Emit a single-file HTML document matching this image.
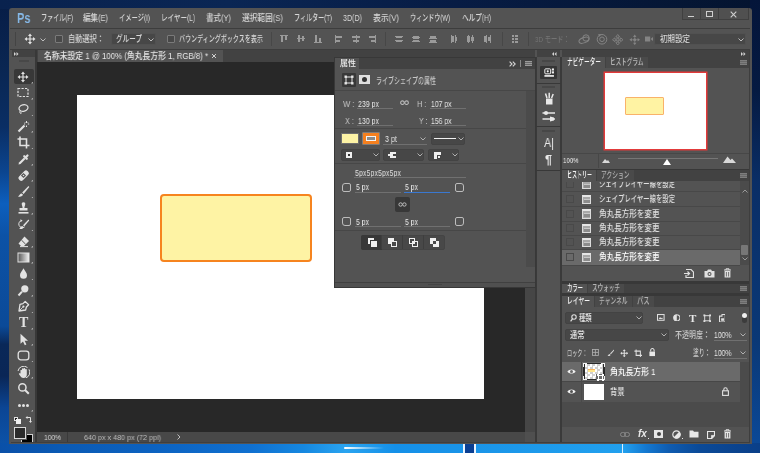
<!DOCTYPE html>
<html lang="ja"><head><meta charset="utf-8"><title>Photoshop</title>
<style>
html,body{margin:0;padding:0}
body{width:760px;height:453px;overflow:hidden;position:relative;background:#0a2a5c;font-family:"Liberation Sans","Noto Sans CJK JP",sans-serif;}
#r{position:absolute;left:0;top:0;width:760px;height:453px;overflow:hidden;filter:blur(0.4px)}
.t{will-change:transform}
#r div,#r span,#r svg{position:absolute;display:block}
.t{white-space:nowrap;transform-origin:0 50%;letter-spacing:0}
</style></head>
<body><div id="r">
<div style="left:0px;top:0px;width:760px;height:453px;background:linear-gradient(180deg,#071d46 0%,#0a2652 15%,#0a2e64 28%,#0b4590 38%,#0d5fbe 45%,#0c52a6 52%,#0b4a98 72%,#0a2858 76%,#0a2656 83%,#0b4594 90%,#0c55ac 100%);"></div>
<div style="left:0px;top:0px;width:760px;height:9px;background:linear-gradient(90deg,#09224e 0%,#0a2654 30%,#071c44 60%,#04142f 100%);"></div>
<div style="left:750px;top:0px;width:10px;height:453px;background:linear-gradient(180deg,#04153a 0%,#051a42 20%,#0a2e66 40%,#0a3470 60%,#0a3876 75%,#0b4a9a 100%);"></div>
<div style="left:0px;top:443px;width:760px;height:10px;background:linear-gradient(90deg,#0a50a8 0%,#0b5ab4 8%,#0c62c0 20%,#1070d0 33%,#1688e0 40%,#2aa4f0 45.5%,#1590e8 52%,#1a94e8 62%,#1e9cec 74%,#22a0ee 82%,#1478d0 85%,#0f5cb0 88%,#0b4a98 92%,#0a3f88 100%);"></div>
<div style="left:344px;top:447px;width:40px;height:2px;background:linear-gradient(90deg,#fff,rgba(255,255,255,0));border-radius:1px"></div>
<div style="left:464px;top:444px;width:10.5px;height:9px;background:#0b3f92;"></div>
<div style="left:463px;top:444px;width:1.5px;height:9px;background:#e8f4ff;"></div>
<div style="left:474px;top:444px;width:1.5px;height:9px;background:#e8f4ff;"></div>
<div style="left:622px;top:444px;width:1.2px;height:9px;background:#d8efff;"></div>
<div style="left:9px;top:8px;width:743px;height:436px;background:#535353;border-radius:3px 3px 0 0"></div>
<span id="t1" class="t" style="left:16.5px;top:9.0px;font-size:14px;line-height:18px;color:#86b9e8;font-weight:700;transform:scaleX(0.7883);">Ps</span>
<span id="t2" class="t" style="left:41px;top:12.0px;font-size:9px;line-height:13px;color:#d8d8d8;font-weight:500;transform:scaleX(0.6737);">ファイル(F)</span>
<span id="t3" class="t" style="left:83px;top:12.0px;font-size:9px;line-height:13px;color:#d8d8d8;font-weight:500;transform:scaleX(0.8333);">編集(E)</span>
<span id="t4" class="t" style="left:119px;top:12.0px;font-size:9px;line-height:13px;color:#d8d8d8;font-weight:500;transform:scaleX(0.6993);">イメージ(I)</span>
<span id="t5" class="t" style="left:161px;top:12.0px;font-size:9px;line-height:13px;color:#d8d8d8;font-weight:500;transform:scaleX(0.7275);">レイヤー(L)</span>
<span id="t6" class="t" style="left:206px;top:12.0px;font-size:9px;line-height:13px;color:#d8d8d8;font-weight:500;transform:scaleX(0.8333);">書式(Y)</span>
<span id="t7" class="t" style="left:242px;top:12.0px;font-size:9px;line-height:13px;color:#d8d8d8;font-weight:500;transform:scaleX(0.8542);">選択範囲(S)</span>
<span id="t8" class="t" style="left:294px;top:12.0px;font-size:9px;line-height:13px;color:#d8d8d8;font-weight:500;transform:scaleX(0.6748);">フィルター(T)</span>
<span id="t9" class="t" style="left:343px;top:12.0px;font-size:9px;line-height:13px;color:#d8d8d8;font-weight:500;transform:scaleX(0.7917);">3D(D)</span>
<span id="t10" class="t" style="left:373px;top:12.0px;font-size:9px;line-height:13px;color:#d8d8d8;font-weight:500;transform:scaleX(0.8667);">表示(V)</span>
<span id="t11" class="t" style="left:410px;top:12.0px;font-size:9px;line-height:13px;color:#d8d8d8;font-weight:500;transform:scaleX(0.6723);">ウィンドウ(W)</span>
<span id="t12" class="t" style="left:462px;top:12.0px;font-size:9px;line-height:13px;color:#d8d8d8;font-weight:500;transform:scaleX(0.7342);">ヘルプ(H)</span>
<div style="left:682px;top:8px;width:67px;height:12px;background:#505050;border:1px solid #404040;border-top:none;box-sizing:border-box"></div>
<div style="left:700px;top:8px;width:1px;height:11px;background:#404040;"></div>
<div style="left:718px;top:8px;width:1px;height:11px;background:#404040;"></div>
<div style="left:688px;top:15.5px;width:6px;height:1.6px;background:#cfcfcf;"></div>
<div style="left:706px;top:11px;width:7px;height:6px;background:transparent;border:1px solid #cfcfcf;border-top-width:1.5px;box-sizing:border-box"></div>
<svg style="left:729.5px;top:10.5px;" width="7" height="7" viewBox="0 0 7 7"><path d="M0.7 0.7L6.3 6.3M6.3 0.7L0.7 6.3" stroke="#cfcfcf" stroke-width="1.1" fill="none"/></svg>
<div style="left:10px;top:28px;width:740px;height:1px;background:#3d3d3d;"></div>
<div style="left:10px;top:49px;width:740px;height:1px;background:#3d3d3d;"></div>
<div style="left:15px;top:32px;width:1.2px;height:14px;background:#444;"></div>
<svg style="left:24px;top:33px;" width="12" height="12" viewBox="0 0 12 12"><path d="M6 0.5L8 3H6.6V5.4H9V4L11.5 6L9 8V6.6H6.6V9H8L6 11.5L4 9H5.4V6.6H3V8L0.5 6L3 4V5.4H5.4V3H4Z" fill="#e4e4e4"/></svg>
<svg style="left:40px;top:38px;" width="6" height="4" viewBox="0 0 6 4"><path d="M0.5 0.5L3 3L5.5 0.5" stroke="#bdbdbd" stroke-width="1" fill="none"/></svg>
<div style="left:55px;top:35px;width:8px;height:8px;background:#484848;border:1px solid #7a7a7a;box-sizing:border-box;border-radius:1px"></div>
<span id="t13" class="t" style="left:68px;top:33.0px;font-size:9px;line-height:13px;color:#d8d8d8;font-weight:500;transform:scaleX(0.7997);">自動選択：</span>
<div style="left:111px;top:33px;width:45px;height:12px;background:#474747;border:1px solid #515151;box-sizing:border-box;border-radius:2px"></div>
<span id="t14" class="t" style="left:116px;top:33.0px;font-size:9px;line-height:13px;color:#d8d8d8;font-weight:500;transform:scaleX(0.7330);">グループ</span>
<svg style="left:148px;top:38px;" width="6" height="4" viewBox="0 0 6 4"><path d="M0.5 0.5L3 3L5.5 0.5" stroke="#bdbdbd" stroke-width="1" fill="none"/></svg>
<div style="left:167px;top:35px;width:8px;height:8px;background:#484848;border:1px solid #7a7a7a;box-sizing:border-box;border-radius:1px"></div>
<span id="t15" class="t" style="left:179px;top:33.0px;font-size:9px;line-height:13px;color:#d8d8d8;font-weight:500;transform:scaleX(0.6714);">バウンディングボックスを表示</span>
<div style="left:271px;top:32px;width:1px;height:14px;background:#474747;"></div>
<div style="left:280px;top:35px;width:8px;height:1px;background:#9a9a9a;"></div>
<div style="left:281px;top:36px;width:2px;height:6px;background:#9a9a9a;"></div>
<div style="left:285px;top:36px;width:2px;height:4px;background:#9a9a9a;"></div>
<div style="left:297px;top:38px;width:8px;height:1px;background:#9a9a9a;"></div>
<div style="left:298px;top:35px;width:2px;height:7px;background:#9a9a9a;"></div>
<div style="left:302px;top:36px;width:2px;height:5px;background:#9a9a9a;"></div>
<div style="left:314px;top:42px;width:8px;height:1px;background:#9a9a9a;"></div>
<div style="left:315px;top:35px;width:2px;height:7px;background:#9a9a9a;"></div>
<div style="left:319px;top:38px;width:2px;height:4px;background:#9a9a9a;"></div>
<div style="left:335px;top:35px;width:1px;height:8px;background:#9a9a9a;"></div>
<div style="left:336px;top:36px;width:6px;height:2px;background:#9a9a9a;"></div>
<div style="left:336px;top:40px;width:4px;height:2px;background:#9a9a9a;"></div>
<div style="left:356px;top:35px;width:1px;height:8px;background:#9a9a9a;"></div>
<div style="left:352px;top:36px;width:8px;height:2px;background:#9a9a9a;"></div>
<div style="left:353px;top:40px;width:6px;height:2px;background:#9a9a9a;"></div>
<div style="left:375px;top:35px;width:1px;height:8px;background:#9a9a9a;"></div>
<div style="left:369px;top:36px;width:6px;height:2px;background:#9a9a9a;"></div>
<div style="left:371px;top:40px;width:4px;height:2px;background:#9a9a9a;"></div>
<div style="left:385px;top:32px;width:1px;height:14px;background:#474747;"></div>
<div style="left:395px;top:36px;width:8px;height:1px;background:#9a9a9a;"></div>
<div style="left:396px;top:37px;width:6px;height:1px;background:#9a9a9a;"></div>
<div style="left:395px;top:40px;width:8px;height:1px;background:#9a9a9a;"></div>
<div style="left:396px;top:41px;width:6px;height:1px;background:#9a9a9a;"></div>
<div style="left:412px;top:37px;width:8px;height:1px;background:#9a9a9a;"></div>
<div style="left:413px;top:36px;width:6px;height:3px;background:#9a9a9a;"></div>
<div style="left:412px;top:41px;width:8px;height:1px;background:#9a9a9a;"></div>
<div style="left:413px;top:40px;width:6px;height:2px;background:#9a9a9a;"></div>
<div style="left:429px;top:38px;width:8px;height:1px;background:#9a9a9a;"></div>
<div style="left:430px;top:36px;width:6px;height:2px;background:#9a9a9a;"></div>
<div style="left:429px;top:42px;width:8px;height:1px;background:#9a9a9a;"></div>
<div style="left:430px;top:40px;width:6px;height:2px;background:#9a9a9a;"></div>
<div style="left:451px;top:35px;width:1px;height:8px;background:#9a9a9a;"></div>
<div style="left:452px;top:36px;width:2px;height:6px;background:#9a9a9a;"></div>
<div style="left:455px;top:35px;width:1px;height:8px;background:#9a9a9a;"></div>
<div style="left:456px;top:37px;width:1px;height:4px;background:#9a9a9a;"></div>
<div style="left:468px;top:35px;width:1px;height:8px;background:#9a9a9a;"></div>
<div style="left:467px;top:36px;width:3px;height:6px;background:#9a9a9a;"></div>
<div style="left:472px;top:35px;width:1px;height:8px;background:#9a9a9a;"></div>
<div style="left:471px;top:37px;width:3px;height:4px;background:#9a9a9a;"></div>
<div style="left:486px;top:35px;width:1px;height:8px;background:#9a9a9a;"></div>
<div style="left:484px;top:36px;width:2px;height:6px;background:#9a9a9a;"></div>
<div style="left:490px;top:35px;width:1px;height:8px;background:#9a9a9a;"></div>
<div style="left:488px;top:37px;width:2px;height:4px;background:#9a9a9a;"></div>
<div style="left:502px;top:32px;width:1px;height:14px;background:#474747;"></div>
<div style="left:512px;top:35px;width:2px;height:2px;background:#9a9a9a;"></div>
<div style="left:512px;top:38px;width:2px;height:2px;background:#9a9a9a;"></div>
<div style="left:512px;top:41px;width:2px;height:2px;background:#9a9a9a;"></div>
<div style="left:515px;top:35px;width:3px;height:2px;background:#9a9a9a;"></div>
<div style="left:515px;top:38px;width:3px;height:2px;background:#9a9a9a;"></div>
<div style="left:515px;top:41px;width:3px;height:2px;background:#9a9a9a;"></div>
<div style="left:528px;top:32px;width:1px;height:14px;background:#474747;"></div>
<span id="t16" class="t" style="left:534.6px;top:33.5px;font-size:8px;line-height:12px;color:#747474;font-weight:500;transform:scaleX(0.7783);">3D モード：</span>
<svg style="left:578px;top:33px;" width="14" height="12" viewBox="0 0 14 12"><circle cx="8" cy="5" r="3.2" fill="none" stroke="#848484" stroke-width="1"/><ellipse cx="6" cy="7.2" rx="5.2" ry="2.6" fill="none" stroke="#848484" stroke-width="1" transform="rotate(-20 6 7.2)"/></svg>
<svg style="left:595.5px;top:33px;" width="12" height="12" viewBox="0 0 12 12"><circle cx="6" cy="6.3" r="4.8" fill="none" stroke="#848484" stroke-width="1"/><circle cx="6" cy="6.3" r="2.3" fill="none" stroke="#848484" stroke-width="1"/><path d="M2.2 1L5.4 1.4L3.2 3.8Z" fill="#848484"/></svg>
<svg style="left:611.5px;top:33.5px;" width="11.5" height="11.5" viewBox="0 0 12 12"><path d="M6 0.5L8 3H6.6V5.4H9V4L11.5 6L9 8V6.6H6.6V9H8L6 11.5L4 9H5.4V6.6H3V8L0.5 6L3 4V5.4H5.4V3H4Z" fill="none" stroke="#848484" stroke-width="0.9"/></svg>
<svg style="left:628.5px;top:33.5px;" width="11.5" height="11.5" viewBox="0 0 12 12"><circle cx="6" cy="6" r="1.6" fill="#848484"/><path d="M6 0.4L7.8 3H4.2ZM6 11.6L7.8 9H4.2ZM0.4 6L3 4.2V7.8ZM11.6 6L9 4.2V7.8Z" fill="#848484"/><path d="M6 2.5V9.5M2.5 6H9.5" stroke="#848484" stroke-width="0.7"/></svg>
<svg style="left:644.5px;top:36px;" width="8" height="6" viewBox="0 0 8 6"><rect x="0" y="0.5" width="5.2" height="5" fill="#848484"/><path d="M5.6 3L8 1V5Z" fill="#848484"/></svg>
<div style="left:654px;top:33px;width:92px;height:12px;background:#474747;border:1px solid #515151;box-sizing:border-box;border-radius:2px"></div>
<span id="t17" class="t" style="left:660px;top:33.0px;font-size:9px;line-height:13px;color:#d8d8d8;font-weight:500;transform:scaleX(0.8330);">初期設定</span>
<svg style="left:738px;top:38px;" width="6" height="4" viewBox="0 0 6 4"><path d="M0.5 0.5L3 3L5.5 0.5" stroke="#bdbdbd" stroke-width="1" fill="none"/></svg>
<div style="left:12px;top:50px;width:23px;height:7px;background:#424242;"></div>
<svg style="left:14px;top:51.5px;" width="5" height="4" viewBox="0 0 5 4"><path d="M0 0L2 2L0 4ZM2.5 0L4.5 2L2.5 4Z" fill="#d4d4d4"/></svg>
<div style="left:35px;top:50px;width:2px;height:392px;background:#383838;"></div>
<div style="left:37px;top:50px;width:497.5px;height:12px;background:#424242;"></div>
<div style="left:534.5px;top:57px;width:2px;height:385px;background:#3a3a3a;"></div>
<div style="left:536.5px;top:50px;width:23.8px;height:7px;background:#424242;"></div>
<svg style="left:552px;top:51.5px;" width="5" height="4" viewBox="0 0 5 4"><path d="M2 0L0 2L2 4ZM4.5 0L2.5 2L4.5 4Z" fill="#d4d4d4"/></svg>
<div style="left:560.3px;top:57px;width:1.8px;height:385px;background:#3a3a3a;"></div>
<div style="left:562px;top:50px;width:187px;height:7px;background:#424242;"></div>
<svg style="left:741px;top:51.5px;" width="5" height="4" viewBox="0 0 5 4"><path d="M0 0L2 2L0 4ZM2.5 0L4.5 2L2.5 4Z" fill="#d4d4d4"/></svg>
<div style="left:749px;top:50px;width:3px;height:394px;background:#525252;"></div>
<div style="left:749px;top:50px;width:1px;height:392px;background:#3e3e3e;"></div>
<div style="left:19px;top:60px;width:10px;height:2px;background:#484848;"></div>
<div style="left:14px;top:69px;width:19.5px;height:15px;background:#383838;border-radius:2px"></div>
<svg style="left:17px;top:70.5px;" width="12" height="12" viewBox="0 0 12 12"><path d="M6 0.5L8 3H6.6V5.4H9V4L11.5 6L9 8V6.6H6.6V9H8L6 11.5L4 9H5.4V6.6H3V8L0.5 6L3 4V5.4H5.4V3H4Z" fill="#e2e2e2"/></svg>
<svg style="left:30.5px;top:81.0px;" width="2.5" height="2.5" viewBox="0 0 2.5 2.5"><path d="M2.5 0V2.5H0Z" fill="#b4b4b4"/></svg>
<svg style="left:17px;top:86.9px;" width="13" height="12" viewBox="0 0 13 12"><rect x="1" y="1.5" width="10" height="8" fill="none" stroke="#e2e2e2" stroke-width="1.2" stroke-dasharray="2.2 1.3"/></svg>
<svg style="left:30.5px;top:97.4px;" width="2.5" height="2.5" viewBox="0 0 2.5 2.5"><path d="M2.5 0V2.5H0Z" fill="#b4b4b4"/></svg>
<svg style="left:17px;top:103.3px;" width="13" height="13" viewBox="0 0 13 13"><ellipse cx="6.5" cy="5" rx="4.6" ry="3.2" fill="none" stroke="#e2e2e2" stroke-width="1.2" transform="rotate(-15 6.5 5)"/><path d="M3.5 7.5C2.5 8.5 2.5 10 3.8 10.5C4.5 10.5 4.5 9.5 3.8 9.2" fill="none" stroke="#e2e2e2" stroke-width="1"/></svg>
<svg style="left:30.5px;top:113.8px;" width="2.5" height="2.5" viewBox="0 0 2.5 2.5"><path d="M2.5 0V2.5H0Z" fill="#b4b4b4"/></svg>
<svg style="left:17px;top:119.7px;" width="13" height="13" viewBox="0 0 13 13"><path d="M1.5 11.5L7.5 5.5" stroke="#e2e2e2" stroke-width="2.2"/><path d="M9.5 1V3M9.5 5.5V7M7 4H8.2M10.8 4H12.2M7.8 2.2L8.4 2.8M11.2 2.2L10.6 2.8" stroke="#e2e2e2" stroke-width="1"/></svg>
<svg style="left:30.5px;top:130.2px;" width="2.5" height="2.5" viewBox="0 0 2.5 2.5"><path d="M2.5 0V2.5H0Z" fill="#b4b4b4"/></svg>
<svg style="left:17px;top:136.1px;" width="13" height="13" viewBox="0 0 13 13"><path d="M3 0.5V9.5H12.5M0.5 3H9.5V12.5" fill="none" stroke="#e2e2e2" stroke-width="1.6"/></svg>
<svg style="left:30.5px;top:146.6px;" width="2.5" height="2.5" viewBox="0 0 2.5 2.5"><path d="M2.5 0V2.5H0Z" fill="#b4b4b4"/></svg>
<svg style="left:17px;top:152.5px;" width="13" height="13" viewBox="0 0 13 13"><path d="M1.5 11.5L2 9.5L7 4.5L8.5 6L3.5 11Z" fill="#e2e2e2"/><path d="M7.2 3.2L9.8 5.8M8.5 4.5L10.5 2.5" stroke="#e2e2e2" stroke-width="2.2" stroke-linecap="round"/></svg>
<svg style="left:30.5px;top:163.0px;" width="2.5" height="2.5" viewBox="0 0 2.5 2.5"><path d="M2.5 0V2.5H0Z" fill="#b4b4b4"/></svg>
<svg style="left:17px;top:168.9px;" width="13" height="13" viewBox="0 0 13 13"><rect x="0.5" y="4" width="12" height="5.4" rx="2.2" fill="#e2e2e2" transform="rotate(-45 6.5 6.5)"/><rect x="4.7" y="4.7" width="3.6" height="3.6" fill="#535353" transform="rotate(-45 6.5 6.5)"/><circle cx="6.5" cy="6.5" r="0.8" fill="#e2e2e2"/></svg>
<svg style="left:30.5px;top:179.4px;" width="2.5" height="2.5" viewBox="0 0 2.5 2.5"><path d="M2.5 0V2.5H0Z" fill="#b4b4b4"/></svg>
<svg style="left:17px;top:185.3px;" width="13" height="13" viewBox="0 0 13 13"><path d="M11.5 1L5.2 7.6L6.6 9L12.3 2Z" fill="#e2e2e2"/><path d="M4.6 8.4C3 8.4 2.8 10 1 11.4C3.4 12 5.8 11.4 5.9 9.6Z" fill="#e2e2e2"/></svg>
<svg style="left:30.5px;top:195.8px;" width="2.5" height="2.5" viewBox="0 0 2.5 2.5"><path d="M2.5 0V2.5H0Z" fill="#b4b4b4"/></svg>
<svg style="left:17px;top:201.7px;" width="13" height="13" viewBox="0 0 13 13"><path d="M4.7 1.5A1.9 1.9 0 0 1 8.3 1.5C8.3 3.2 7.4 4 7.4 6H10.5V8.5H2.5V6H5.6C5.6 4 4.7 3.2 4.7 1.5Z" fill="#e2e2e2"/><rect x="1.5" y="10" width="10" height="1.6" fill="#e2e2e2"/></svg>
<svg style="left:30.5px;top:212.2px;" width="2.5" height="2.5" viewBox="0 0 2.5 2.5"><path d="M2.5 0V2.5H0Z" fill="#b4b4b4"/></svg>
<svg style="left:17px;top:218.1px;" width="13" height="13" viewBox="0 0 13 13"><path d="M11.5 1.5L6 7.2L7.2 8.4L12.2 2.4Z" fill="#e2e2e2"/><path d="M5.4 8C4 8 3.8 9.6 2.2 10.8C4.4 11.4 6.4 10.8 6.5 9.2Z" fill="#e2e2e2"/><path d="M5 2.5A3.6 3.6 0 1 0 7.5 9" fill="none" stroke="#e2e2e2" stroke-width="1"/><path d="M3.4 1.2L5.6 2.5L3.6 4Z" fill="#e2e2e2"/></svg>
<svg style="left:30.5px;top:228.6px;" width="2.5" height="2.5" viewBox="0 0 2.5 2.5"><path d="M2.5 0V2.5H0Z" fill="#b4b4b4"/></svg>
<svg style="left:17px;top:234.5px;" width="13" height="13" viewBox="0 0 13 13"><path d="M7.5 1.5L12 6L7 11H4L1.5 8.5Z" fill="#e2e2e2"/><path d="M4.4 5L8.6 9.2" stroke="#535353" stroke-width="1"/><path d="M3 11.6H11" stroke="#e2e2e2" stroke-width="1"/></svg>
<svg style="left:30.5px;top:245.0px;" width="2.5" height="2.5" viewBox="0 0 2.5 2.5"><path d="M2.5 0V2.5H0Z" fill="#b4b4b4"/></svg>
<svg style="left:17px;top:250.9px;" width="13" height="13" viewBox="0 0 13 13"><defs><linearGradient id="gr1" x1="0" x2="1"><stop offset="0" stop-color="#555"/><stop offset="1" stop-color="#f2f2f2"/></linearGradient></defs><rect x="1" y="2" width="11" height="9" fill="url(#gr1)" stroke="#e2e2e2" stroke-width="1"/></svg>
<svg style="left:30.5px;top:261.4px;" width="2.5" height="2.5" viewBox="0 0 2.5 2.5"><path d="M2.5 0V2.5H0Z" fill="#b4b4b4"/></svg>
<svg style="left:17px;top:267.3px;" width="13" height="13" viewBox="0 0 13 13"><path d="M6.5 1.2C8 4 10 5.8 10 8.2A3.5 3.5 0 0 1 3 8.2C3 5.8 5 4 6.5 1.2Z" fill="#e2e2e2"/></svg>
<svg style="left:30.5px;top:277.8px;" width="2.5" height="2.5" viewBox="0 0 2.5 2.5"><path d="M2.5 0V2.5H0Z" fill="#b4b4b4"/></svg>
<svg style="left:17px;top:283.7px;" width="13" height="13" viewBox="0 0 13 13"><circle cx="7.8" cy="4.8" r="3.6" fill="#e2e2e2"/><path d="M5 7.6L1.5 11.5" stroke="#e2e2e2" stroke-width="2"/></svg>
<svg style="left:30.5px;top:294.2px;" width="2.5" height="2.5" viewBox="0 0 2.5 2.5"><path d="M2.5 0V2.5H0Z" fill="#b4b4b4"/></svg>
<svg style="left:17px;top:300.1px;" width="13" height="13" viewBox="0 0 13 13"><path d="M8.2 1.4L11.6 4.8L9.4 7L8.6 10L2 11L3 4.4L6 3.6Z" fill="none" stroke="#e2e2e2" stroke-width="1.3" stroke-linejoin="round"/><circle cx="6.4" cy="6.6" r="1.1" fill="#e2e2e2"/><path d="M2.2 10.8L5.8 7.2" stroke="#e2e2e2" stroke-width="0.9"/></svg>
<svg style="left:30.5px;top:310.6px;" width="2.5" height="2.5" viewBox="0 0 2.5 2.5"><path d="M2.5 0V2.5H0Z" fill="#b4b4b4"/></svg>
<span id="t18" class="t" style="left:18.5px;top:314.0px;font-size:14px;line-height:18px;color:#e2e2e2;font-weight:700;transform:scaleX(0.9632);font-family:'Liberation Serif',serif;">T</span>
<svg style="left:30.5px;top:327.0px;" width="2.5" height="2.5" viewBox="0 0 2.5 2.5"><path d="M2.5 0V2.5H0Z" fill="#b4b4b4"/></svg>
<svg style="left:17px;top:332.9px;" width="13" height="13" viewBox="0 0 13 13"><path d="M3.5 0.8V10.8L6 8.4L7.8 12.2L9.4 11.5L7.6 7.8H11Z" fill="#e2e2e2"/></svg>
<svg style="left:30.5px;top:343.4px;" width="2.5" height="2.5" viewBox="0 0 2.5 2.5"><path d="M2.5 0V2.5H0Z" fill="#b4b4b4"/></svg>
<svg style="left:17px;top:349.3px;" width="13" height="13" viewBox="0 0 13 13"><rect x="1.2" y="2.2" width="10.6" height="8.6" rx="2.6" fill="none" stroke="#e2e2e2" stroke-width="1.3"/></svg>
<svg style="left:30.5px;top:359.8px;" width="2.5" height="2.5" viewBox="0 0 2.5 2.5"><path d="M2.5 0V2.5H0Z" fill="#b4b4b4"/></svg>
<svg style="left:17px;top:365.7px;" width="13" height="13" viewBox="0 0 13 13"><path d="M3.5 7.5V4.2A0.8 0.8 0 0 1 5 4.2V3A0.8 0.8 0 0 1 6.6 3V2.8A0.8 0.8 0 0 1 8.2 3V3.6A0.8 0.8 0 0 1 9.8 3.8V8.5C9.8 11 8.5 12 6.5 12C4.6 12 4 11 2 8.2C1.6 7.4 2.6 6.8 3.5 7.5Z" fill="#e2e2e2"/><path d="M1 5A5.8 5.8 0 0 1 10.5 1.6" fill="none" stroke="#e2e2e2" stroke-width="1"/><path d="M12 3.4A5.8 5.8 0 0 1 9 11.8" fill="none" stroke="#e2e2e2" stroke-width="1"/></svg>
<svg style="left:30.5px;top:376.2px;" width="2.5" height="2.5" viewBox="0 0 2.5 2.5"><path d="M2.5 0V2.5H0Z" fill="#b4b4b4"/></svg>
<svg style="left:17px;top:382.1px;" width="13" height="13" viewBox="0 0 13 13"><circle cx="5.4" cy="5.4" r="3.6" fill="none" stroke="#e2e2e2" stroke-width="1.5"/><path d="M8 8L11.8 11.8" stroke="#e2e2e2" stroke-width="2"/></svg>
<div style="left:18.3px;top:403.9px;width:3px;height:3px;background:#e2e2e2;border-radius:50%"></div>
<div style="left:22.3px;top:403.9px;width:3px;height:3px;background:#e2e2e2;border-radius:50%"></div>
<div style="left:26.3px;top:403.9px;width:3px;height:3px;background:#e2e2e2;border-radius:50%"></div>
<svg style="left:30.5px;top:409.0px;" width="2.5" height="2.5" viewBox="0 0 2.5 2.5"><path d="M2.5 0V2.5H0Z" fill="#b4b4b4"/></svg>
<div style="left:14px;top:417px;width:4px;height:4px;background:#1c1c1c;border:1px solid #e0e0e0;box-sizing:border-box"></div>
<div style="left:16px;top:419px;width:5px;height:5px;background:#f0f0f0;"></div>
<svg style="left:25px;top:416px;" width="8" height="8" viewBox="0 0 8 8"><path d="M2 1.5H5.5V5" fill="none" stroke="#e0e0e0" stroke-width="1"/><path d="M0.5 1.5L2.5 0V3Z M5.5 7L4 5H7Z" fill="#e0e0e0"/></svg>
<div style="left:21px;top:434px;width:12px;height:8.5px;background:#000;border:1px solid #cfcfcf;border-bottom:none;box-sizing:border-box"></div>
<div style="left:14px;top:427px;width:12px;height:12px;background:#2b2b2b;border:1px solid #d8d8d8;box-sizing:border-box;box-shadow:0 0 0 1px #535353"></div>
<div style="left:38px;top:50px;width:185px;height:12px;background:#535353;"></div>
<span id="t19" class="t" style="left:44px;top:50.0px;font-size:9px;line-height:13px;color:#e6e6e6;font-weight:500;transform:scaleX(0.8692);">名称未設定 1 @ 100% (角丸長方形 1, RGB/8) *</span>
<svg style="left:211px;top:53px;" width="6" height="6" viewBox="0 0 6 6"><path d="M1 1L5 5M5 1L1 5" stroke="#cfcfcf" stroke-width="1" fill="none"/></svg>
<div style="left:37px;top:62px;width:488px;height:369.5px;background:#282828;"></div>
<div style="left:524.5px;top:62px;width:10.2px;height:369.5px;background:#464646;"></div>
<div style="left:37px;top:431.5px;width:498px;height:10px;background:#484848;"></div>
<div style="left:524.5px;top:431.5px;width:10.2px;height:10px;background:#4f4f4f;"></div>
<div style="left:67px;top:431.5px;width:1px;height:10px;background:#3a3a3a;"></div>
<span id="t20" class="t" style="left:44px;top:431.5px;font-size:8px;line-height:12px;color:#d8d8d8;font-weight:500;transform:scaleX(0.8305);">100%</span>
<span id="t21" class="t" style="left:84px;top:431.5px;font-size:8px;line-height:12px;color:#bdbdbd;font-weight:500;transform:scaleX(0.8970);">640 px x 480 px (72 ppi)</span>
<svg style="left:177px;top:434px;" width="4" height="6" viewBox="0 0 4 6"><path d="M0.5 0.5L3 3L0.5 5.5" stroke="#bdbdbd" stroke-width="1" fill="none"/></svg>
<div style="left:77px;top:95px;width:407px;height:304px;background:#fff;"></div>
<div style="left:160px;top:193.7px;width:152px;height:67.9px;background:#fef3a4;border:2px solid #f6841f;border-radius:4px;box-sizing:border-box"></div>
<div style="left:334px;top:57px;width:202px;height:231px;background:#383838;"></div>
<div style="left:335px;top:58px;width:200px;height:11px;background:#424242;"></div>
<div style="left:335px;top:58px;width:24px;height:12px;background:#535353;"></div>
<span id="t22" class="t" style="left:339.5px;top:58.3px;font-size:8px;line-height:12px;color:#f0f0f0;font-weight:500;transform:scaleX(0.9688);">属性</span>
<svg style="left:509px;top:60.5px;" width="7" height="6" viewBox="0 0 7 6"><path d="M0.6 0.6L3 3L0.6 5.4M3.8 0.6L6.2 3L3.8 5.4" fill="none" stroke="#d4d4d4" stroke-width="1.1"/></svg>
<div style="left:520px;top:60px;width:1px;height:7px;background:#8a8a8a;"></div>
<div style="left:525px;top:61px;width:6.5px;height:5px;background:#686868;"></div>
<div style="left:525px;top:61px;width:6.5px;height:1px;background:#9a9a9a;"></div>
<div style="left:525px;top:63px;width:6.5px;height:1px;background:#9a9a9a;"></div>
<div style="left:525px;top:65px;width:6.5px;height:1px;background:#9a9a9a;"></div>
<div style="left:335px;top:69px;width:200px;height:213px;background:#535353;"></div>
<div style="left:342px;top:73px;width:14px;height:14px;background:#383838;border-radius:1px"></div>
<svg style="left:344px;top:75px;" width="10" height="10" viewBox="0 0 10 10"><rect x="2" y="2" width="6" height="6" fill="none" stroke="#e6e6e6" stroke-width="1"/><rect x="0.5" y="0.5" width="2.4" height="2.4" fill="#e6e6e6"/><rect x="7.1" y="0.5" width="2.4" height="2.4" fill="#e6e6e6"/><rect x="0.5" y="7.1" width="2.4" height="2.4" fill="#e6e6e6"/><rect x="7.1" y="7.1" width="2.4" height="2.4" fill="#e6e6e6"/></svg>
<div style="left:359px;top:75px;width:11px;height:9px;background:#e0e0e0;"></div>
<div style="left:362px;top:77px;width:5px;height:5px;background:#333;border-radius:50%"></div>
<span id="t23" class="t" style="left:376px;top:74.5px;font-size:9px;line-height:13px;color:#c8c8c8;font-weight:500;transform:scaleX(0.6666);">ライブシェイプの属性</span>
<div style="left:335px;top:90px;width:200px;height:1px;background:#474747;"></div>
<div style="left:526px;top:91px;width:9px;height:176px;background:#4b4b4b;"></div>
<span id="t24" class="t" style="left:342.5px;top:98.0px;font-size:9px;line-height:13px;color:#c4c4c4;font-weight:500;transform:scaleX(0.8519);">W :</span>
<span id="t25" class="t" style="left:357.5px;top:98.0px;font-size:9px;line-height:13px;color:#e8e8e8;font-weight:500;transform:scaleX(0.7769);">239 px</span>
<div style="left:357px;top:108px;width:36px;height:1px;background:#707070;"></div>
<span id="t26" class="t" style="left:417px;top:98.0px;font-size:9px;line-height:13px;color:#c4c4c4;font-weight:500;transform:scaleX(0.8250);">H :</span>
<span id="t27" class="t" style="left:431px;top:98.0px;font-size:9px;line-height:13px;color:#e8e8e8;font-weight:500;transform:scaleX(0.7584);">107 px</span>
<div style="left:430px;top:108px;width:36px;height:1px;background:#707070;"></div>
<span id="t28" class="t" style="left:345px;top:114.5px;font-size:9px;line-height:13px;color:#c4c4c4;font-weight:500;transform:scaleX(0.8170);">X :</span>
<span id="t29" class="t" style="left:357.5px;top:114.5px;font-size:9px;line-height:13px;color:#e8e8e8;font-weight:500;transform:scaleX(0.7769);">130 px</span>
<div style="left:357px;top:124.5px;width:36px;height:1px;background:#707070;"></div>
<span id="t30" class="t" style="left:418.5px;top:114.5px;font-size:9px;line-height:13px;color:#c4c4c4;font-weight:500;transform:scaleX(0.7839);">Y :</span>
<span id="t31" class="t" style="left:431px;top:114.5px;font-size:9px;line-height:13px;color:#e8e8e8;font-weight:500;transform:scaleX(0.7584);">156 px</span>
<div style="left:430px;top:124.5px;width:36px;height:1px;background:#707070;"></div>
<svg style="left:399.5px;top:100px;" width="9" height="5.4" viewBox="0 0 10 6"><circle cx="2.7" cy="3" r="2" fill="none" stroke="#b8b8b8" stroke-width="1.2"/><circle cx="7.3" cy="3" r="2" fill="none" stroke="#b8b8b8" stroke-width="1.2"/></svg>
<div style="left:335px;top:128px;width:191px;height:1px;background:#474747;"></div>
<div style="left:341px;top:133px;width:17.5px;height:10.5px;background:#fdf3a5;border:1px solid #6e6e6e;box-sizing:border-box"></div>
<div style="left:361.5px;top:132px;width:18.5px;height:12.5px;background:#f5801f;border:1px solid #7c7c7c;box-sizing:border-box;border-radius:1px"></div>
<div style="left:366px;top:135.5px;width:10px;height:5.5px;background:#8a8a8a;border:1px solid #f4f4f4;box-sizing:border-box"></div>
<span id="t32" class="t" style="left:385px;top:132.5px;font-size:9px;line-height:13px;color:#e8e8e8;font-weight:500;transform:scaleX(0.7992);">3 pt</span>
<svg style="left:419.5px;top:136.5px;" width="6" height="4" viewBox="0 0 6 4"><path d="M0.5 0.5L3 3L5.5 0.5" stroke="#b0b0b0" stroke-width="1" fill="none"/></svg>
<div style="left:383px;top:144px;width:44px;height:1px;background:#707070;"></div>
<div style="left:431px;top:133px;width:34px;height:12px;background:#474747;border:1px solid #434343;box-sizing:border-box;border-radius:2px"></div>
<div style="left:434px;top:137.6px;width:22px;height:1.7px;background:#f0f0f0;"></div>
<svg style="left:457.5px;top:136.5px;" width="6" height="4" viewBox="0 0 6 4"><path d="M0.5 0.5L3 3L5.5 0.5" stroke="#b0b0b0" stroke-width="1" fill="none"/></svg>
<div style="left:340.5px;top:149px;width:39.5px;height:12px;background:#474747;border:1px solid #434343;box-sizing:border-box;border-radius:2px"></div>
<svg style="left:372.5px;top:153px;" width="6" height="4" viewBox="0 0 6 4"><path d="M0.5 0.5L3 3L5.5 0.5" stroke="#b0b0b0" stroke-width="1" fill="none"/></svg>
<div style="left:383px;top:149px;width:41px;height:12px;background:#474747;border:1px solid #434343;box-sizing:border-box;border-radius:2px"></div>
<svg style="left:417px;top:153px;" width="6" height="4" viewBox="0 0 6 4"><path d="M0.5 0.5L3 3L5.5 0.5" stroke="#b0b0b0" stroke-width="1" fill="none"/></svg>
<div style="left:428px;top:149px;width:31px;height:12px;background:#474747;border:1px solid #434343;box-sizing:border-box;border-radius:2px"></div>
<svg style="left:452px;top:153px;" width="6" height="4" viewBox="0 0 6 4"><path d="M0.5 0.5L3 3L5.5 0.5" stroke="#b0b0b0" stroke-width="1" fill="none"/></svg>
<div style="left:346px;top:152px;width:6px;height:6px;background:#f0f0f0;"></div>
<div style="left:348px;top:154px;width:2px;height:2px;background:#333;"></div>
<div style="left:390px;top:152px;width:6px;height:6px;background:#f0f0f0;"></div>
<div style="left:388px;top:154px;width:3px;height:2px;background:#f0f0f0;"></div>
<div style="left:393px;top:154px;width:3px;height:2px;background:#454545;"></div>
<div style="left:434px;top:152px;width:7px;height:7px;background:#f0f0f0;"></div>
<div style="left:437px;top:155px;width:4px;height:4px;background:#454545;"></div>
<div style="left:438px;top:156px;width:2px;height:2px;background:#f0f0f0;"></div>
<div style="left:335px;top:163px;width:191px;height:1px;background:#474747;"></div>
<span id="t33" class="t" style="left:354.5px;top:167.0px;font-size:9px;line-height:13px;color:#e0e0e0;font-weight:500;transform:scaleX(0.7925);">5px5px5px5px</span>
<div style="left:354px;top:177px;width:112px;height:1px;background:#707070;"></div>
<div style="left:342px;top:182.5px;width:9px;height:9px;background:transparent;border:1px solid #bcbcbc;box-sizing:border-box;border-radius:3px 2px 2px 2px"></div>
<div style="left:454.5px;top:182.5px;width:9px;height:9px;background:transparent;border:1px solid #bcbcbc;box-sizing:border-box;border-radius:2px 3px 2px 2px"></div>
<div style="left:342px;top:217px;width:9px;height:9px;background:transparent;border:1px solid #bcbcbc;box-sizing:border-box;border-radius:2px 2px 2px 3px"></div>
<div style="left:454.5px;top:217px;width:9px;height:9px;background:transparent;border:1px solid #bcbcbc;box-sizing:border-box;border-radius:2px 2px 3px 2px"></div>
<span id="t34" class="t" style="left:355.5px;top:181.0px;font-size:9px;line-height:13px;color:#e8e8e8;font-weight:500;transform:scaleX(0.7640);">5 px</span>
<span id="t35" class="t" style="left:404.5px;top:181.0px;font-size:9px;line-height:13px;color:#e8e8e8;font-weight:500;transform:scaleX(0.7640);">5 px</span>
<div style="left:355px;top:191.5px;width:46px;height:1px;background:#707070;"></div>
<div style="left:404px;top:191.5px;width:46px;height:1px;background:#3a78d0;"></div>
<span id="t36" class="t" style="left:355.5px;top:215.5px;font-size:9px;line-height:13px;color:#e8e8e8;font-weight:500;transform:scaleX(0.7640);">5 px</span>
<span id="t37" class="t" style="left:404.5px;top:215.5px;font-size:9px;line-height:13px;color:#e8e8e8;font-weight:500;transform:scaleX(0.7640);">5 px</span>
<div style="left:355px;top:226.0px;width:46px;height:1px;background:#707070;"></div>
<div style="left:404px;top:226.0px;width:46px;height:1px;background:#707070;"></div>
<div style="left:395px;top:196.5px;width:15px;height:15px;background:#383838;border-radius:2px"></div>
<svg style="left:398px;top:201.5px;" width="9" height="5" viewBox="0 0 9 5"><circle cx="2.6" cy="2.5" r="1.7" fill="none" stroke="#bdbdbd" stroke-width="1"/><circle cx="6.4" cy="2.5" r="1.7" fill="none" stroke="#bdbdbd" stroke-width="1"/></svg>
<div style="left:335px;top:230px;width:191px;height:1px;background:#474747;"></div>
<div style="left:361px;top:234.5px;width:83.5px;height:15px;background:#484848;border:1px solid #444;box-sizing:border-box;border-radius:2px"></div>
<div style="left:361px;top:234.5px;width:21px;height:15px;background:#383838;border-radius:2px 0 0 2px"></div>
<div style="left:381.3px;top:235px;width:1px;height:14px;background:#3e3e3e;"></div>
<div style="left:402.1px;top:235px;width:1px;height:14px;background:#3e3e3e;"></div>
<div style="left:422.9px;top:235px;width:1px;height:14px;background:#3e3e3e;"></div>
<div style="left:367.5px;top:238px;width:6px;height:6px;background:#f0f0f0;"></div>
<div style="left:370.5px;top:241px;width:6px;height:6px;background:#f0f0f0;box-shadow:0 0 0 1px #383838"></div>
<div style="left:388.2px;top:238px;width:6px;height:6px;background:#f0f0f0;"></div>
<div style="left:390.7px;top:240.5px;width:6px;height:6px;background:#4a4a4a;border:1px solid #f0f0f0;box-sizing:border-box"></div>
<div style="left:408.9px;top:238px;width:6px;height:6px;background:transparent;border:1px solid #f0f0f0;box-sizing:border-box"></div>
<div style="left:411.9px;top:241px;width:6px;height:6px;background:transparent;border:1px solid #f0f0f0;box-sizing:border-box"></div>
<div style="left:411.9px;top:241px;width:3px;height:3px;background:#f0f0f0;"></div>
<div style="left:429.6px;top:238px;width:6px;height:6px;background:#f0f0f0;"></div>
<div style="left:432.6px;top:241px;width:6px;height:6px;background:#f0f0f0;"></div>
<div style="left:432.6px;top:241px;width:3px;height:3px;background:#4a4a4a;"></div>
<div style="left:335px;top:282.4px;width:200px;height:1px;background:#404040;"></div>
<div style="left:335px;top:283.4px;width:200px;height:3.6px;background:#505050;"></div>
<div style="left:428px;top:284.3px;width:14px;height:1px;background:#454545;"></div>
<div style="left:542px;top:60px;width:13px;height:2px;background:#474747;"></div>
<div style="left:540.3px;top:65.5px;width:16.5px;height:13px;background:#353535;border-radius:1px"></div>
<svg style="left:543.6px;top:67.5px;" width="10.8" height="9.2" viewBox="0 0 13 11"><rect x="1" y="1" width="7" height="6" rx="1" fill="none" stroke="#f0f0f0" stroke-width="1.2"/><circle cx="4.5" cy="4" r="1.3" fill="#f0f0f0"/><rect x="9.5" y="0.5" width="2.5" height="2.5" fill="#f0f0f0"/><rect x="9.5" y="4" width="2.5" height="2.5" fill="#f0f0f0"/><rect x="0.5" y="8.5" width="11.5" height="2" fill="#f0f0f0"/></svg>
<div style="left:536px;top:82.5px;width:25px;height:1px;background:#383838;"></div>
<div style="left:542px;top:86px;width:13px;height:2px;background:#474747;"></div>
<svg style="left:543px;top:92px;" width="12" height="13" viewBox="0 0 12 13"><path d="M3 6.5H9.5V12.5H3Z" fill="#e8e8e8"/><path d="M4 6L2.5 1.5M6.2 6V0.8M8.6 6L10.2 2" stroke="#e8e8e8" stroke-width="1.5"/></svg>
<svg style="left:542px;top:110px;" width="14" height="12" viewBox="0 0 14 12"><path d="M0.5 3H13M0.5 9H13" stroke="#e8e8e8" stroke-width="1.3"/><circle cx="4" cy="3" r="2.1" fill="#e8e8e8"/><path d="M8 6.5L12 7.6V10.4L8 11.5Z" fill="#e8e8e8"/></svg>
<div style="left:536px;top:126px;width:25px;height:1px;background:#383838;"></div>
<div style="left:542px;top:130px;width:13px;height:2px;background:#474747;"></div>
<span id="t38" class="t" style="left:543.5px;top:134.5px;font-size:12px;line-height:16px;color:#eaeaea;font-weight:500;transform:scaleX(0.8989);">A|</span>
<span id="t39" class="t" style="left:545px;top:151.5px;font-size:12px;line-height:16px;color:#eaeaea;font-weight:700;transform:scaleX(1.0467);">¶</span>
<div style="left:536px;top:170px;width:25px;height:1px;background:#383838;"></div>
<div style="left:562px;top:57px;width:187px;height:10.5px;background:#424242;"></div>
<div style="left:562px;top:57px;width:43px;height:11.5px;background:#535353;"></div>
<span id="t40" class="t" style="left:567px;top:56.2px;font-size:9px;line-height:13px;color:#f2f2f2;font-weight:500;transform:scaleX(0.6294);">ナビゲーター</span>
<div style="left:606px;top:57px;width:41.5px;height:10.5px;background:#4a4a4a;"></div>
<span id="t41" class="t" style="left:610px;top:56.2px;font-size:9px;line-height:13px;color:#b4b4b4;font-weight:500;transform:scaleX(0.6234);">ヒストグラム</span>
<div style="left:740px;top:59.75px;width:6.5px;height:5px;background:#686868;"></div>
<div style="left:740px;top:59.75px;width:6.5px;height:1px;background:#7e7e7e;"></div>
<div style="left:740px;top:61.75px;width:6.5px;height:1px;background:#7e7e7e;"></div>
<div style="left:740px;top:63.75px;width:6.5px;height:1px;background:#7e7e7e;"></div>
<div style="left:562px;top:67.5px;width:187px;height:101.5px;background:#535353;"></div>
<div style="left:604px;top:72px;width:103px;height:77.5px;background:#fff;border:1px solid #e23a3a;box-sizing:border-box;box-shadow:0 0 0 0.5px #e23a3a"></div>
<div style="left:625px;top:97px;width:39px;height:18px;background:#fff3a3;border:1px solid #f9b26a;box-sizing:border-box;border-radius:1px"></div>
<div style="left:562px;top:153px;width:187px;height:1px;background:#474747;"></div>
<div style="left:598px;top:154px;width:1px;height:14px;background:#474747;"></div>
<span id="t42" class="t" style="left:562.6px;top:155.0px;font-size:8px;line-height:12px;color:#f0f0f0;font-weight:500;transform:scaleX(0.7621);">100%</span>
<svg style="left:602px;top:158px;" width="8" height="5" viewBox="0 0 8 5"><path d="M0 5L3 1L5 3L6 2L8 5Z" fill="#d8d8d8"/></svg>
<div style="left:618px;top:157.7px;width:100px;height:1.6px;background:#767676;"></div>
<svg style="left:663px;top:159px;" width="8" height="6" viewBox="0 0 8 6"><path d="M4 0L8 6H0Z" fill="#fff"/></svg>
<svg style="left:723px;top:156px;" width="13" height="7" viewBox="0 0 13 7"><path d="M0 7L4.5 0.5L7.5 4L9 2.5L13 7Z" fill="#d8d8d8"/></svg>
<div style="left:562px;top:168.5px;width:187px;height:1px;background:#383838;"></div>
<div style="left:562px;top:169.5px;width:187px;height:11.5px;background:#424242;"></div>
<div style="left:562px;top:169.5px;width:33.5px;height:12.5px;background:#535353;"></div>
<span id="t43" class="t" style="left:567px;top:169.2px;font-size:9px;line-height:13px;color:#f2f2f2;font-weight:500;transform:scaleX(0.5554);">ヒストリー</span>
<div style="left:596.5px;top:169.5px;width:37.0px;height:11.5px;background:#4a4a4a;"></div>
<span id="t44" class="t" style="left:600.5px;top:169.2px;font-size:9px;line-height:13px;color:#b4b4b4;font-weight:500;transform:scaleX(0.6396);">アクション</span>
<div style="left:740px;top:172.75px;width:6.5px;height:5px;background:#686868;"></div>
<div style="left:740px;top:172.75px;width:6.5px;height:1px;background:#7e7e7e;"></div>
<div style="left:740px;top:174.75px;width:6.5px;height:1px;background:#7e7e7e;"></div>
<div style="left:740px;top:176.75px;width:6.5px;height:1px;background:#7e7e7e;"></div>
<div style="left:562px;top:181px;width:187px;height:100px;background:#535353;"></div>
<div style="left:562px;top:182px;width:178px;height:10px;overflow:hidden">
<div style="left:0px;top:9.2px;width:177.5px;height:1px;background:#484848;"></div>
<div style="left:4px;top:-1.6500000000000004px;width:8px;height:8px;background:transparent;border:1px solid #494949;box-sizing:border-box"></div>
<div style="left:20px;top:-2.1500000000000004px;width:9px;height:9.5px;background:#a8a8a8;border:1px solid #dcdcdc;border-top:2.5px solid #e6e6e6;box-sizing:border-box"></div>
<div style="left:21.5px;top:1.8499999999999996px;width:6px;height:4px;background:#8c8c8c;border-top:1px solid #c8c8c8;box-sizing:border-box"></div>
<span id="t45" class="t" style="left:36.5px;top:-3.7px;font-size:9px;line-height:13px;color:#e0e0e0;font-weight:500;transform:scaleX(0.7054);">シェイプレイヤー線を設定</span>
</div>
<div style="left:562px;top:206.0px;width:177.5px;height:1px;background:#484848;"></div>
<div style="left:566px;top:195.25px;width:8px;height:8px;background:transparent;border:1px solid #494949;box-sizing:border-box"></div>
<div style="left:582px;top:194.75px;width:9px;height:9.5px;background:#a8a8a8;border:1px solid #dcdcdc;border-top:2.5px solid #e6e6e6;box-sizing:border-box"></div>
<div style="left:583.5px;top:198.75px;width:6px;height:4px;background:#8c8c8c;border-top:1px solid #c8c8c8;box-sizing:border-box"></div>
<span id="t46" class="t" style="left:598.5px;top:193.2px;font-size:9px;line-height:13px;color:#e0e0e0;font-weight:500;transform:scaleX(0.7054);">シェイプレイヤー線を設定</span>
<div style="left:562px;top:220.5px;width:177.5px;height:1px;background:#484848;"></div>
<div style="left:566px;top:209.75px;width:8px;height:8px;background:transparent;border:1px solid #494949;box-sizing:border-box"></div>
<div style="left:582px;top:209.25px;width:9px;height:9.5px;background:#a8a8a8;border:1px solid #dcdcdc;border-top:2.5px solid #e6e6e6;box-sizing:border-box"></div>
<div style="left:583.5px;top:213.25px;width:6px;height:4px;background:#8c8c8c;border-top:1px solid #c8c8c8;box-sizing:border-box"></div>
<span id="t47" class="t" style="left:598.5px;top:207.8px;font-size:9px;line-height:13px;color:#e0e0e0;font-weight:500;transform:scaleX(0.8401);">角丸長方形を変更</span>
<div style="left:562px;top:234.5px;width:177.5px;height:1px;background:#484848;"></div>
<div style="left:566px;top:224.0px;width:8px;height:8px;background:transparent;border:1px solid #494949;box-sizing:border-box"></div>
<div style="left:582px;top:223.5px;width:9px;height:9.5px;background:#a8a8a8;border:1px solid #dcdcdc;border-top:2.5px solid #e6e6e6;box-sizing:border-box"></div>
<div style="left:583.5px;top:227.5px;width:6px;height:4px;background:#8c8c8c;border-top:1px solid #c8c8c8;box-sizing:border-box"></div>
<span id="t48" class="t" style="left:598.5px;top:222.0px;font-size:9px;line-height:13px;color:#e0e0e0;font-weight:500;transform:scaleX(0.8401);">角丸長方形を変更</span>
<div style="left:562px;top:249.0px;width:177.5px;height:1px;background:#484848;"></div>
<div style="left:566px;top:238.25px;width:8px;height:8px;background:transparent;border:1px solid #494949;box-sizing:border-box"></div>
<div style="left:582px;top:237.75px;width:9px;height:9.5px;background:#a8a8a8;border:1px solid #dcdcdc;border-top:2.5px solid #e6e6e6;box-sizing:border-box"></div>
<div style="left:583.5px;top:241.75px;width:6px;height:4px;background:#8c8c8c;border-top:1px solid #c8c8c8;box-sizing:border-box"></div>
<span id="t49" class="t" style="left:598.5px;top:236.2px;font-size:9px;line-height:13px;color:#e0e0e0;font-weight:500;transform:scaleX(0.8401);">角丸長方形を変更</span>
<div style="left:562px;top:249.5px;width:177.5px;height:15.5px;background:#6a6a6a;"></div>
<div style="left:562px;top:264.5px;width:177.5px;height:1px;background:#484848;"></div>
<div style="left:566px;top:253.25px;width:8px;height:8px;background:transparent;border:1px solid #494949;box-sizing:border-box"></div>
<div style="left:582px;top:252.75px;width:9px;height:9.5px;background:#a8a8a8;border:1px solid #dcdcdc;border-top:2.5px solid #e6e6e6;box-sizing:border-box"></div>
<div style="left:583.5px;top:256.75px;width:6px;height:4px;background:#8c8c8c;border-top:1px solid #c8c8c8;box-sizing:border-box"></div>
<span id="t50" class="t" style="left:598.5px;top:251.2px;font-size:9px;line-height:13px;color:#fff;font-weight:500;transform:scaleX(0.8401);">角丸長方形を変更</span>
<div style="left:739.5px;top:181px;width:9.5px;height:84px;background:#4b4b4b;"></div>
<svg style="left:741.5px;top:188.5px;" width="6" height="4" viewBox="0 0 6 4"><path d="M0.5 3.5L3 1L5.5 3.5" stroke="#9a9a9a" stroke-width="1" fill="none"/></svg>
<div style="left:740.5px;top:245px;width:7.5px;height:9.5px;background:#777;border-radius:1px"></div>
<svg style="left:741.5px;top:256.5px;" width="6" height="4" viewBox="0 0 6 4"><path d="M0.5 0.5L3 3L5.5 0.5" stroke="#9a9a9a" stroke-width="1" fill="none"/></svg>
<svg style="left:684px;top:269px;" width="10" height="9" viewBox="0 0 10 9"><path d="M2 0.5H7L9.5 3V8.5H2V6" fill="none" stroke="#e0e0e0" stroke-width="1.2"/><path d="M0 4.5H5M3.5 2.5L5.5 4.5L3.5 6.5" stroke="#e0e0e0" stroke-width="1.2" fill="none"/></svg>
<svg style="left:704px;top:269px;" width="11" height="9" viewBox="0 0 11 9"><path d="M0.5 2H3L4 0.6H7L8 2H10.5V8.5H0.5Z" fill="#e0e0e0"/><circle cx="5.5" cy="5" r="2" fill="#535353"/><circle cx="5.5" cy="5" r="1" fill="#e0e0e0"/></svg>
<svg style="left:723px;top:268px;" width="9" height="10" viewBox="0 0 9 10"><path d="M1 2H8M3 2V0.8H6V2" stroke="#e0e0e0" stroke-width="1" fill="none"/><path d="M1.6 3H7.4V9.5H1.6Z" fill="#e0e0e0"/><path d="M3.4 4V8.5M5.6 4V8.5" stroke="#535353" stroke-width="0.8"/></svg>
<div style="left:562px;top:281px;width:187px;height:2.5px;background:#383838;"></div>
<div style="left:562px;top:283.5px;width:187px;height:9.5px;background:#424242;"></div>
<div style="left:562px;top:283.5px;width:25px;height:10.5px;background:#535353;"></div>
<span id="t51" class="t" style="left:567px;top:282.2px;font-size:9px;line-height:13px;color:#f2f2f2;font-weight:500;transform:scaleX(0.5922);">カラー</span>
<div style="left:588px;top:283.5px;width:36px;height:9.5px;background:#4a4a4a;"></div>
<span id="t52" class="t" style="left:591.5px;top:282.2px;font-size:9px;line-height:13px;color:#b4b4b4;font-weight:500;transform:scaleX(0.6220);">スウォッチ</span>
<div style="left:740px;top:285.75px;width:6.5px;height:5px;background:#686868;"></div>
<div style="left:740px;top:285.75px;width:6.5px;height:1px;background:#7e7e7e;"></div>
<div style="left:740px;top:287.75px;width:6.5px;height:1px;background:#7e7e7e;"></div>
<div style="left:740px;top:289.75px;width:6.5px;height:1px;background:#7e7e7e;"></div>
<div style="left:562px;top:293.3px;width:187px;height:2.7px;background:#383838;"></div>
<div style="left:562px;top:296px;width:187px;height:10.5px;background:#424242;"></div>
<div style="left:562px;top:296px;width:32px;height:11.5px;background:#535353;"></div>
<span id="t53" class="t" style="left:567px;top:295.2px;font-size:9px;line-height:13px;color:#f2f2f2;font-weight:500;transform:scaleX(0.6436);">レイヤー</span>
<div style="left:595px;top:296px;width:36.5px;height:10.5px;background:#4a4a4a;"></div>
<span id="t54" class="t" style="left:598.5px;top:295.2px;font-size:9px;line-height:13px;color:#b4b4b4;font-weight:500;transform:scaleX(0.6371);">チャンネル</span>
<div style="left:632.5px;top:296px;width:21.5px;height:10.5px;background:#4a4a4a;"></div>
<span id="t55" class="t" style="left:636.5px;top:295.2px;font-size:9px;line-height:13px;color:#b4b4b4;font-weight:500;transform:scaleX(0.6938);">パス</span>
<div style="left:740px;top:298.75px;width:6.5px;height:5px;background:#686868;"></div>
<div style="left:740px;top:298.75px;width:6.5px;height:1px;background:#7e7e7e;"></div>
<div style="left:740px;top:300.75px;width:6.5px;height:1px;background:#7e7e7e;"></div>
<div style="left:740px;top:302.75px;width:6.5px;height:1px;background:#7e7e7e;"></div>
<div style="left:562px;top:306.8px;width:187px;height:135.2px;background:#535353;"></div>
<div style="left:564.5px;top:311.5px;width:78.5px;height:12px;background:#474747;border:1px solid #434343;box-sizing:border-box;border-radius:2px"></div>
<svg style="left:570px;top:314px;" width="7" height="8" viewBox="0 0 7 8"><circle cx="4" cy="3" r="2.2" fill="none" stroke="#e0e0e0" stroke-width="1.1"/><path d="M2.6 4.6L0.6 7.4" stroke="#e0e0e0" stroke-width="1.2"/></svg>
<span id="t56" class="t" style="left:579px;top:311.5px;font-size:9px;line-height:13px;color:#e8e8e8;font-weight:500;transform:scaleX(0.6938);">種類</span>
<svg style="left:635.5px;top:315.5px;" width="6" height="4" viewBox="0 0 6 4"><path d="M0.5 0.5L3 3L5.5 0.5" stroke="#b0b0b0" stroke-width="1" fill="none"/></svg>
<svg style="left:657.2px;top:314.1px;" width="7.6" height="6.8" viewBox="0 0 9 8"><rect x="0.6" y="0.6" width="7.8" height="6.8" fill="none" stroke="#e0e0e0" stroke-width="1.2"/><path d="M2 6L3.6 3.6L5 5L6 4.2L7 6Z" fill="#e0e0e0"/></svg>
<svg style="left:672.7px;top:313.7px;" width="7.6" height="7.6" viewBox="0 0 9 9"><circle cx="4.5" cy="4.5" r="3.7" fill="none" stroke="#e0e0e0" stroke-width="1.2"/><path d="M4.5 0.8A3.7 3.7 0 0 0 4.5 8.2Z" fill="#e0e0e0"/></svg>
<span id="t57" class="t" style="left:688.5px;top:310.5px;font-size:11px;line-height:15px;color:#e8e8e8;font-weight:700;transform:scaleX(0.9532);font-family:'Liberation Serif',serif;">T</span>
<svg style="left:702.8px;top:313.8px;" width="8.5" height="8.5" viewBox="0 0 10 10"><rect x="2" y="2" width="6" height="6" fill="none" stroke="#e0e0e0" stroke-width="1.1"/><rect x="0.5" y="0.5" width="2.2" height="2.2" fill="#e0e0e0"/><rect x="7.3" y="0.5" width="2.2" height="2.2" fill="#e0e0e0"/><rect x="0.5" y="7.3" width="2.2" height="2.2" fill="#e0e0e0"/><rect x="7.3" y="7.3" width="2.2" height="2.2" fill="#e0e0e0"/></svg>
<svg style="left:718.6px;top:313.8px;" width="6.8" height="8.5" viewBox="0 0 8 10"><path d="M0.6 2.5H3.5V0.6H7.4V9.4H0.6Z" fill="none" stroke="#e0e0e0" stroke-width="1.2"/><rect x="2.5" y="5" width="3.5" height="3" fill="#e0e0e0"/></svg>
<div style="left:742px;top:312.5px;width:5px;height:10.5px;background:#3c3c3c;border-radius:2.5px"></div>
<div style="left:742px;top:312.5px;width:5px;height:5px;background:#f0f0f0;border-radius:50%"></div>
<div style="left:564.5px;top:329px;width:104px;height:12px;background:#474747;border:1px solid #434343;box-sizing:border-box;border-radius:2px"></div>
<span id="t58" class="t" style="left:570px;top:329.0px;font-size:9px;line-height:13px;color:#e8e8e8;font-weight:500;transform:scaleX(0.8049);">通常</span>
<svg style="left:661px;top:333px;" width="6" height="4" viewBox="0 0 6 4"><path d="M0.5 0.5L3 3L5.5 0.5" stroke="#b0b0b0" stroke-width="1" fill="none"/></svg>
<span id="t59" class="t" style="left:675px;top:329.0px;font-size:9px;line-height:13px;color:#c8c8c8;font-weight:500;transform:scaleX(0.7775);">不透明度：</span>
<span id="t60" class="t" style="left:714px;top:329.0px;font-size:9px;line-height:13px;color:#e8e8e8;font-weight:500;transform:scaleX(0.7598);">100%</span>
<div style="left:713.5px;top:340px;width:33.5px;height:1px;background:#707070;"></div>
<svg style="left:740px;top:333px;" width="6" height="4" viewBox="0 0 6 4"><path d="M0.5 0.5L3 3L5.5 0.5" stroke="#b0b0b0" stroke-width="1" fill="none"/></svg>
<span id="t61" class="t" style="left:566.5px;top:346.8px;font-size:8.5px;line-height:12.5px;color:#c8c8c8;font-weight:500;transform:scaleX(0.6027);">ロック：</span>
<svg style="left:592.1px;top:349.1px;" width="6.8" height="6.8" viewBox="0 0 8 8"><rect x="0.5" y="0.5" width="7" height="7" fill="none" stroke="#b0b0b0" stroke-width="1"/><path d="M4 0.5V7.5M0.5 4H7.5" stroke="#b0b0b0" stroke-width="1"/></svg>
<svg style="left:606.7px;top:348.7px;" width="7.6" height="7.6" viewBox="0 0 9 9"><path d="M8.3 0.6L3.6 5.2L4.6 6.2L8.8 1.4Z" fill="#d8d8d8"/><path d="M3.2 5.8C2 5.8 2 7 0.6 8C2.4 8.6 4.2 8 4.2 6.8Z" fill="#d8d8d8"/></svg>
<svg style="left:619.8px;top:348.8px;" width="8.5" height="8.5" viewBox="0 0 10 10"><path d="M5 0.3L6.8 2.4H5.6V4.4H7.6V3.2L9.7 5L7.6 6.8V5.6H5.6V7.6H6.8L5 9.7L3.2 7.6H4.4V5.6H2.4V6.8L0.3 5L2.4 3.2V4.4H4.4V2.4H3.2Z" fill="#e0e0e0"/></svg>
<svg style="left:633.8px;top:348.8px;" width="8.5" height="8.5" viewBox="0 0 10 10"><path d="M2.5 0.5V7.5H9.5M0.5 2.5H7.5V9.5" fill="none" stroke="#e0e0e0" stroke-width="1.2"/></svg>
<svg style="left:648.6px;top:348.2px;" width="6.8" height="8.5" viewBox="0 0 8 10"><rect x="0.5" y="4.2" width="7" height="5.3" fill="#e8e8e8"/><path d="M2 4.2V2.6A2 2 0 0 1 6 2.6V4.2" fill="none" stroke="#e8e8e8" stroke-width="1.2"/></svg>
<span id="t62" class="t" style="left:692.5px;top:346.5px;font-size:9px;line-height:13px;color:#c8c8c8;font-weight:500;transform:scaleX(0.6478);">塗り：</span>
<span id="t63" class="t" style="left:714px;top:346.5px;font-size:9px;line-height:13px;color:#e8e8e8;font-weight:500;transform:scaleX(0.7598);">100%</span>
<div style="left:713.5px;top:357.5px;width:33.5px;height:1px;background:#707070;"></div>
<svg style="left:740px;top:350.5px;" width="6" height="4" viewBox="0 0 6 4"><path d="M0.5 0.5L3 3L5.5 0.5" stroke="#b0b0b0" stroke-width="1" fill="none"/></svg>
<div style="left:562px;top:362px;width:177.5px;height:19px;background:#6a6a6a;"></div>
<div style="left:562px;top:381px;width:177.5px;height:1px;background:#474747;"></div>
<div style="left:562px;top:401.5px;width:177.5px;height:1px;background:#474747;"></div>
<div style="left:562px;top:402px;width:187px;height:25px;background:#4b4b4b;"></div>
<div style="left:739.5px;top:362px;width:9.5px;height:65px;background:#4b4b4b;"></div>
<svg style="left:566.5px;top:368px;" width="9" height="7" viewBox="0 0 9 7"><path d="M0.4 3.5C2 0.8 7 0.8 8.6 3.5C7 6.2 2 6.2 0.4 3.5Z" fill="#f0f0f0"/><circle cx="4.5" cy="3.5" r="1.5" fill="#6a6a6a"/></svg>
<svg style="left:566.5px;top:388px;" width="9" height="7" viewBox="0 0 9 7"><path d="M0.4 3.5C2 0.8 7 0.8 8.6 3.5C7 6.2 2 6.2 0.4 3.5Z" fill="#f0f0f0"/><circle cx="4.5" cy="3.5" r="1.5" fill="#535353"/></svg>
<div style="left:580.7px;top:362px;width:1px;height:39.5px;background:#4a4a4a;"></div>
<div style="left:583px;top:362.8px;width:21.5px;height:17.6px;background:#2a2a2a;"></div>
<div style="left:584.5px;top:364.2px;width:18.5px;height:14.8px;background:#fff;background:conic-gradient(#cfcfcf 25%,#fff 0 50%,#cfcfcf 0 75%,#fff 0) 0 0/5px 5px"></div>
<div style="left:583px;top:362.8px;width:4px;height:1px;background:#f4f4f4;"></div>
<div style="left:583px;top:362.8px;width:1px;height:4px;background:#f4f4f4;"></div>
<div style="left:600.5px;top:362.8px;width:4px;height:1px;background:#f4f4f4;"></div>
<div style="left:603.5px;top:362.8px;width:1px;height:4px;background:#f4f4f4;"></div>
<div style="left:583px;top:379.4px;width:4px;height:1px;background:#f4f4f4;"></div>
<div style="left:583px;top:376.4px;width:1px;height:4px;background:#f4f4f4;"></div>
<div style="left:600.5px;top:379.4px;width:4px;height:1px;background:#f4f4f4;"></div>
<div style="left:603.5px;top:376.4px;width:1px;height:4px;background:#f4f4f4;"></div>
<div style="left:588.4px;top:369.2px;width:6.8px;height:3px;background:#ffe58a;border-top:1px solid #f9b45c;box-sizing:border-box"></div>
<div style="left:596px;top:373.5px;width:8px;height:7px;background:#6a6a6a;"></div>
<svg style="left:597px;top:374px;" width="7" height="7" viewBox="0 0 7 7"><rect x="1.5" y="1.5" width="4" height="4" fill="none" stroke="#fff" stroke-width="1"/><rect x="0" y="0" width="2" height="2" fill="#fff"/><rect x="5" y="0" width="2" height="2" fill="#fff"/><rect x="0" y="5" width="2" height="2" fill="#fff"/><rect x="5" y="5" width="2" height="2" fill="#fff"/></svg>
<span id="t64" class="t" style="left:610px;top:365.5px;font-size:9px;line-height:13px;color:#fff;font-weight:500;transform:scaleX(0.8664);">角丸長方形 1</span>
<div style="left:584px;top:384px;width:20px;height:15.5px;background:#fff;"></div>
<span id="t65" class="t" style="left:610px;top:385.5px;font-size:9px;line-height:13px;color:#e8e8e8;font-weight:500;transform:scaleX(0.8049);">背景</span>
<svg style="left:721.5px;top:387px;" width="7" height="9" viewBox="0 0 7 9"><rect x="0.6" y="3.8" width="5.8" height="4.6" fill="none" stroke="#e0e0e0" stroke-width="1.1"/><path d="M1.8 3.8V2.4A1.7 1.7 0 0 1 5.2 2.4V3.8" fill="none" stroke="#e0e0e0" stroke-width="1.1"/></svg>
<div style="left:562px;top:427.5px;width:187px;height:14.5px;background:#535353;"></div>
<svg style="left:620px;top:431.5px;" width="10" height="5" viewBox="0 0 10 5"><rect x="0.5" y="0.5" width="5" height="4" rx="2" fill="none" stroke="#8a8a8a" stroke-width="1"/><rect x="4.5" y="0.5" width="5" height="4" rx="2" fill="none" stroke="#8a8a8a" stroke-width="1"/></svg>
<span id="t66" class="t" style="left:637.5px;top:427.0px;font-size:10px;line-height:14px;color:#e8e8e8;font-weight:700;transform:scaleX(0.9544);font-style:italic;">fx</span>
<div style="left:648px;top:438px;width:1px;height:1px;background:#e8e8e8;"></div>
<div style="left:654px;top:430px;width:9px;height:7.5px;background:#e8e8e8;"></div>
<div style="left:656.5px;top:431.5px;width:4px;height:4px;background:#444;border-radius:50%"></div>
<svg style="left:672px;top:430px;" width="9" height="9" viewBox="0 0 9 9"><circle cx="4.5" cy="4.5" r="3.7" fill="none" stroke="#e8e8e8" stroke-width="1.2"/><path d="M1.8 7.2A3.7 3.7 0 0 0 7.2 1.8Z" fill="#e8e8e8"/></svg>
<div style="left:682px;top:438px;width:1px;height:1px;background:#e8e8e8;"></div>
<svg style="left:688.5px;top:430px;" width="10" height="8" viewBox="0 0 10 8"><path d="M0.5 0.5H4L5 1.8H9.5V7.5H0.5Z" fill="#e8e8e8"/></svg>
<svg style="left:706.5px;top:430.5px;" width="8" height="8" viewBox="0 0 9 9"><path d="M0.6 0.6H8.4V5.4L5.4 8.4H0.6Z" fill="none" stroke="#e8e8e8" stroke-width="1.2"/><path d="M5 8.4V5H8.4" fill="#e8e8e8" stroke="#e8e8e8" stroke-width="0.8"/></svg>
<svg style="left:723px;top:429px;" width="9" height="10" viewBox="0 0 9 10"><path d="M1 2H8M3 2V0.8H6V2" stroke="#e8e8e8" stroke-width="1" fill="none"/><path d="M1.6 3H7.4V9.5H1.6Z" fill="#e8e8e8"/><path d="M3.4 4V8.5M5.6 4V8.5" stroke="#535353" stroke-width="0.8"/></svg>
<div style="left:11px;top:441.6px;width:739px;height:0.9px;background:#3f3f3f;"></div>
</div></body></html>
